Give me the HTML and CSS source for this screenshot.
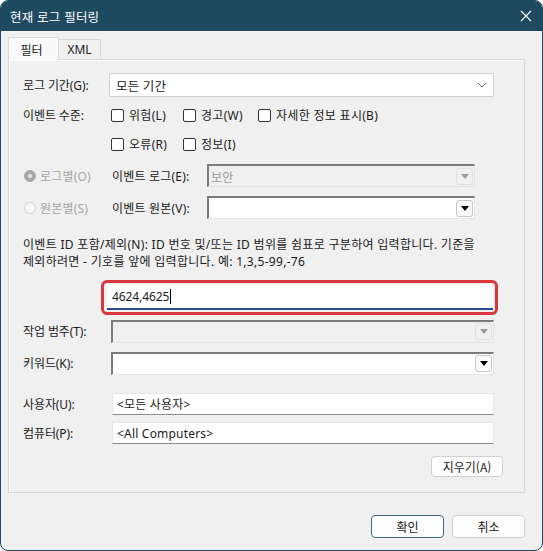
FILE: index.html
```html
<!DOCTYPE html>
<html lang="ko">
<head>
<meta charset="utf-8">
<title>현재 로그 필터링</title>
<link rel="stylesheet" href="styles.css">
</head>
<body>
<div class="window">
  <div class="titlebar">
    <span class="title">현재 로그 필터링</span>
    <svg class="close" width="12" height="12" viewBox="0 0 12 12"><path d="M1 1 L11 11 M11 1 L1 11" stroke="#ffffff" stroke-width="1.1" fill="none"/></svg>
  </div>
  <div class="body">
    <div class="tabs">
      <div class="tab active">필터</div>
      <div class="tab">XML</div>
    </div>
    <div class="panel">
      <div class="row r1">
        <span class="lbl">로그 기간(G):</span>
        <div class="select">
          <span>모든 기간</span>
          <svg width="10" height="6" viewBox="0 0 10 6"><path d="M1 1 L5 5 L9 1" stroke="#6a6a6a" stroke-width="1" fill="none"/></svg>
        </div>
      </div>
      <div class="row r2">
        <span class="lbl">이벤트 수준:</span>
        <label class="chk w1"><span class="box"></span>위험(L)</label>
        <label class="chk w2"><span class="box"></span>경고(W)</label>
        <label class="chk"><span class="box"></span>자세한 정보 표시(B)</label>
      </div>
      <div class="row r3">
        <span class="lbl"></span>
        <label class="chk w1"><span class="box"></span>오류(R)</label>
        <label class="chk w2"><span class="box"></span>정보(I)</label>
      </div>
      <div class="row r4">
        <span class="radio checked"></span>
        <span class="rlabel">로그별(O)</span>
        <span class="lbl2">이벤트 로그(E):</span>
        <div class="combo disabled">
          <span class="ctext">보안</span>
          <span class="dd"><svg width="8" height="5" viewBox="0 0 8 5"><path d="M0 0 H8 L4 5 Z" fill="#9a9a9a"/></svg></span>
        </div>
      </div>
      <div class="row r5">
        <span class="radio"></span>
        <span class="rlabel">원본별(S)</span>
        <span class="lbl2">이벤트 원본(V):</span>
        <div class="combo">
          <span class="ctext"></span>
          <span class="dd"><svg width="8" height="5" viewBox="0 0 8 5"><path d="M0 0 H8 L4 5 Z" fill="#000000"/></svg></span>
        </div>
      </div>
      <p class="hint">이벤트 ID 포함/제외(N): ID 번호 및/또는 ID 범위를 쉼표로 구분하여 입력합니다. 기준을<br>제외하려면 - 기호를 앞에 입력합니다. 예: 1,3,5-99,-76</p>
      <div class="idwrap">
        <div class="idinput">4624,4625<span class="caret"></span></div>
      </div>
      <div class="row r6">
        <span class="lbl">작업 범주(T):</span>
        <div class="combo wide disabled">
          <span class="ctext"></span>
          <span class="dd"><svg width="8" height="5" viewBox="0 0 8 5"><path d="M0 0 H8 L4 5 Z" fill="#9a9a9a"/></svg></span>
        </div>
      </div>
      <div class="row r7">
        <span class="lbl">키워드(K):</span>
        <div class="combo wide">
          <span class="ctext"></span>
          <span class="dd"><svg width="8" height="5" viewBox="0 0 8 5"><path d="M0 0 H8 L4 5 Z" fill="#000000"/></svg></span>
        </div>
      </div>
      <div class="row r8">
        <span class="lbl">사용자(U):</span>
        <div class="textbox">&lt;모든 사용자&gt;</div>
      </div>
      <div class="row r9">
        <span class="lbl">컴퓨터(P):</span>
        <div class="textbox">&lt;All Computers&gt;</div>
      </div>
      <div class="row r10">
        <button class="btn clear">지우기(A)</button>
      </div>
    </div>
    <div class="buttons">
      <button class="btn default">확인</button>
      <button class="btn">취소</button>
    </div>
  </div>
</div>
</body>
</html>
```

FILE: styles.css
```css
* { box-sizing: border-box; }
html, body {
  margin: 0;
  padding: 0;
  background: #ffffff;
}
body {
  font-family: "Noto Sans", "Noto Sans CJK KR", sans-serif;
  font-size: 12px;
  letter-spacing: 0.2px;
  color: #1a1a1a;
}
.window {
  width: 543px;
  height: 551px;
  background: #f0f0f0;
  border: 1px solid #1d4a5f;
  border-radius: 8px;
  overflow: hidden;
}
.titlebar {
  height: 30px;
  background: #1d4a5f;
  color: #ffffff;
  display: flex;
  align-items: center;
  justify-content: space-between;
  padding: 0 10px 0 9px;
}
.title {
  font-family: "Noto Sans CJK KR", sans-serif;
  font-size: 12.5px;
  letter-spacing: 0.2px;
}
.body {
  padding: 6px 17px 0 7px;
}
.tabs {
  display: flex;
  height: 22px;
  align-items: flex-end;
  position: relative;
  z-index: 2;
}
.tab {
  height: 20px;
  width: 43px;
  border: 1px solid #d9d9d9;
  border-bottom: none;
  background: #f0f0f0;
  display: flex;
  align-items: center;
  justify-content: center;
  margin-left: -1px;
  letter-spacing: 0;
}
.tab.active {
  height: 23px;
  width: 51px;
  margin-left: 0;
  margin-bottom: -1px;
  background: #f9f9f9;
  padding-right: 4px;
  font-family: "Noto Sans CJK KR", sans-serif;
}
.panel {
  height: 434px;
  border: 1px solid #d9d9d9;
  background: #f0f0f0;
  box-shadow: inset 1px 1px 0 #fbfbfb;
  padding: 0 0 0 14px;
  display: flex;
  flex-direction: column;
}
.row {
  display: flex;
  align-items: center;
}
.lbl {
  width: 86px;
  flex: none;
  white-space: nowrap;
  letter-spacing: -0.1px;
}
.r1 { margin-top: 13px; height: 24px; }
.select {
  width: 385px;
  height: 24px;
  background: #ffffff;
  border: 1px solid #cfcfcf;
  border-radius: 2px;
  display: flex;
  align-items: center;
  justify-content: space-between;
  padding: 0 6px 0 6px;
  font-size: 12.5px;
}
.r2 { margin-top: 8px; height: 20px; }
.r3 { margin-top: 9px; height: 20px; }
.r2 .lbl, .r3 .lbl { width: 88px; }
.chk {
  display: flex;
  align-items: center;
  white-space: nowrap;
  letter-spacing: 0.3px;
}
.chk.w1 { width: 72px; }
.chk.w2 { width: 75px; }
.box {
  width: 13px;
  height: 13px;
  border: 1px solid #333333;
  border-radius: 2px;
  background: #ffffff;
  margin-right: 5px;
  flex: none;
}
.r4 { margin-top: 10px; height: 23px; }
.r5 { margin-top: 9px; height: 23px; }
.radio {
  width: 12px;
  height: 12px;
  border-radius: 50%;
  border: 1px solid #cfcfcf;
  background: #f7f7f7;
  margin-left: 1px;
  flex: none;
  position: relative;
}
.radio.checked {
  border-color: #a8a8a8;
  background: #a8a8a8;
}
.radio.checked::after {
  content: "";
  position: absolute;
  left: 3px;
  top: 3px;
  width: 4px;
  height: 4px;
  border-radius: 50%;
  background: #e8e8e8;
}
.rlabel {
  color: #a6a6a6;
  margin-left: 4px;
  width: 72px;
  flex: none;
  white-space: nowrap;
}
.lbl2 {
  width: 95px;
  flex: none;
  white-space: nowrap;
}
.combo {
  width: 268px;
  height: 23px;
  background: #ffffff;
  border-top: 2px solid #7a7a7a;
  border-left: 2px solid #7a7a7a;
  border-right: 1px solid #e4e4e4;
  border-bottom: 1px solid #e4e4e4;
  display: flex;
  align-items: center;
  justify-content: space-between;
  padding: 0 1px;
}
.combo.wide { width: 383px; }
.combo.disabled { background: #f0f0f0; }
.ctext {
  color: #9a9a9a;
  padding-left: 1px;
  font-family: "Noto Sans CJK KR", sans-serif;
}
.dd {
  width: 17px;
  height: 17px;
  border: 1px solid #c8c8c8;
  border-radius: 3px;
  background: #fafafa;
  display: flex;
  align-items: center;
  justify-content: center;
}
.disabled .dd {
  border-color: #e0e0e0;
  background: #f0f0f0;
}
.hint {
  margin: 17px 0 0 0;
  line-height: 17px;
  white-space: nowrap;
  letter-spacing: 0.3px;
}
.idwrap {
  margin: 10px 0 0 78px;
  width: 397px;
  height: 35px;
  border: 3px solid #d9363e;
  border-radius: 6px;
  padding: 2px 2px 2px 3px;
}
.idinput {
  width: 386px;
  height: 25px;
  background: #ffffff;
  border-bottom: 2px solid #2a4a86;
  display: flex;
  align-items: center;
  padding-left: 5px;
  letter-spacing: -0.1px;
}
.caret {
  width: 1px;
  height: 15px;
  background: #000000;
  margin-left: 1px;
}
.r6 { margin-top: 5px; height: 22px; }
.r7 { margin-top: 10px; height: 22px; }
.r6 .lbl, .r7 .lbl { width: 88px; }
.r8 { margin-top: 19px; height: 22px; }
.r9 { margin-top: 7px; height: 22px; }
.r8 .lbl, .r9 .lbl { width: 89px; }
.textbox {
  width: 382px;
  height: 22px;
  background: #ffffff;
  border: 1px solid #e6e6e6;
  border-bottom: 1px solid #8c8c8c;
  display: flex;
  align-items: center;
  padding-left: 4px;
}
.r10 {
  margin-top: 12px;
  justify-content: flex-end;
  padding-right: 21px;
}
.btn {
  font-family: "Noto Sans CJK KR", "Noto Sans", sans-serif;
  font-size: 12px;
  letter-spacing: 0;
  color: #1a1a1a;
  background: #fdfdfd;
  border: 1px solid #d0d0d0;
  border-radius: 4px;
  height: 21px;
  padding: 0;
}
.btn.clear { width: 72px; }
.buttons {
  margin-top: 22px;
  display: flex;
  justify-content: flex-end;
  gap: 8px;
}
.buttons .btn {
  width: 73px;
  height: 23px;
}
.buttons .btn.default { border-color: #3b6a8a; }
```
